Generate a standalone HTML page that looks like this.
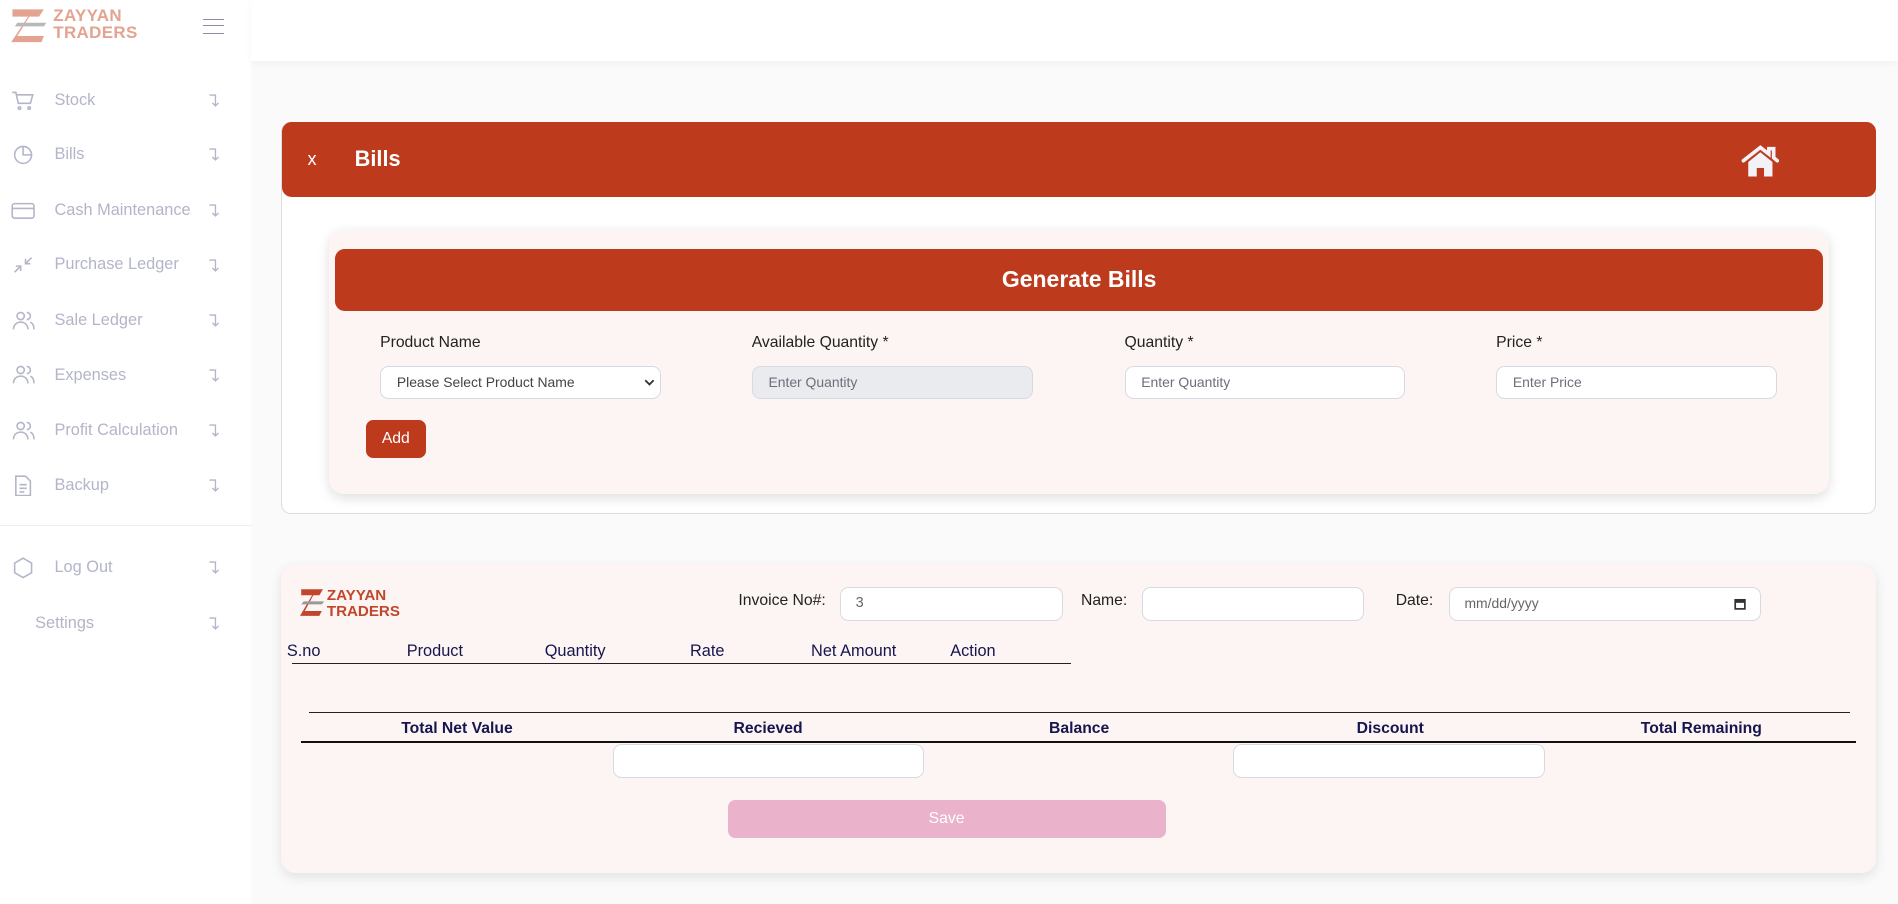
<!DOCTYPE html>
<html><head><meta charset="utf-8">
<style>
html{zoom:1.2105}
*{box-sizing:border-box;margin:0;padding:0}
body{width:1568px;height:747px;overflow:hidden;background:#fafafb;font-family:"Liberation Sans",sans-serif;position:relative}
.abs{position:absolute}
.side{left:0;top:0;width:207px;height:747px;background:#fff}
.mi{position:absolute;left:0;width:207px;height:20px;color:#b3b5c8;font-size:13.5px}
.mi .t{position:absolute;left:45px;top:2px}
.mi .ar{position:absolute;left:171px;top:3px}
.mi svg{position:absolute;left:9px;top:1px}
.topbar{left:207px;top:0;width:1361px;height:50px;background:#fff;box-shadow:0 2px 6px rgba(0,0,0,.04)}
.card1{left:232px;top:101px;width:1318px;height:324px;border:1px solid #dcdde3;border-radius:8px;background:#fff}
.hdr{left:233px;top:101px;width:1317px;height:62px;background:#bd3b1c;border-radius:8px;color:#fff}
.inner{left:272px;top:190px;width:1239px;height:218px;background:#fdf5f3;border-radius:12px;box-shadow:0 3px 10px rgba(0,0,0,.13)}
.gen{left:277px;top:206px;width:1229px;height:51px;background:#bd3b1c;border-radius:8px;color:#fff;font-weight:bold;font-size:19px;text-align:center;line-height:51px}
.lbl{font-size:13px;color:#222}
.inp{height:28px;width:232px;border:1px solid #d8dae3;border-radius:7px;background:#fff;font-size:11.5px;color:#6c6f7a;padding-left:13px;line-height:26px}
.card2{left:232px;top:467px;width:1318px;height:254px;background:#fdf5f3;border-radius:12px;box-shadow:0 3px 10px rgba(0,0,0,.1)}
.th{font-family:"Liberation Sans Narrow","Liberation Sans",sans-serif;font-size:13.5px;color:#15154f}
.tb{font-size:13px;font-weight:bold;color:#15154f;text-align:center;width:257px}
.i2{height:28px;border:1px solid #d8dae3;border-radius:7px;background:#fff;font-size:12px;color:#666;padding-left:12px;line-height:26px}
</style></head><body>
<svg width="0" height="0" style="position:absolute"><defs><symbol id="ar" viewBox="0 0 12 14"><path d="M2 2.5h5v9M4.5 9l2.5 2.5L9.5 9" fill="none" stroke="#b3b5c8" stroke-width="1.1"/></symbol></defs></svg>
<div class="abs side">
  <svg class="abs" style="left:8px;top:6px" width="32" height="30" viewBox="0 0 32 30"><path d="M2 2h26l-4 6H16L6 24h22l-2 5H1l14-21H2z" fill="#e3a390"/><path d="M6 13h24l-2 3H4z" fill="#b8b8b8"/></svg>
  <div class="abs" style="left:44px;top:7px;color:#e3a390;font-weight:bold;font-size:14px;line-height:14px;letter-spacing:.3px">ZAYYAN<br>TRADERS</div>
  <div class="abs" style="left:168px;top:16px;width:17px;height:12px;border-top:1.5px solid #8b8da8;border-bottom:1.5px solid #8b8da8"><div style="margin-top:4px;border-top:1.5px solid #8b8da8"></div></div>
  <div class="mi" style="top:73px"><svg width="20" height="18" viewBox="0 0 20 18" fill="none" stroke="#b3b5c8" stroke-width="1.3"><path d="M1 2h3l2 9h10l2-7H5"/><circle cx="7" cy="15" r="1"/><circle cx="15" cy="15" r="1"/></svg><span class="t">Stock</span><svg class="ar" style="left:171px" width="12" height="14"><use href="#ar"/></svg></div>
  <div class="mi" style="top:118px"><svg width="20" height="18" viewBox="0 0 20 18" fill="none" stroke="#b3b5c8" stroke-width="1.3"><circle cx="10" cy="9" r="7"/><path d="M10 2v7h7"/></svg><span class="t">Bills</span><svg class="ar" style="left:171px" width="12" height="14"><use href="#ar"/></svg></div>
  <div class="mi" style="top:164px"><svg width="20" height="18" viewBox="0 0 20 18" fill="none" stroke="#b3b5c8" stroke-width="1.3"><rect x="1" y="3" width="18" height="12" rx="2"/><path d="M1 7h18"/></svg><span class="t">Cash Maintenance</span><svg class="ar" style="left:171px" width="12" height="14"><use href="#ar"/></svg></div>
  <div class="mi" style="top:209px"><svg width="20" height="18" viewBox="0 0 20 18" fill="none" stroke="#b3b5c8" stroke-width="1.3"><path d="M3 15l5-5M4 10h4v4M17 3l-5 5M12 4v4h4"/></svg><span class="t">Purchase Ledger</span><svg class="ar" style="left:171px" width="12" height="14"><use href="#ar"/></svg></div>
  <div class="mi" style="top:255px"><svg width="20" height="18" viewBox="0 0 20 18" fill="none" stroke="#b3b5c8" stroke-width="1.3"><circle cx="8" cy="5" r="3"/><path d="M2 16c0-4 3-6 6-6s6 2 6 6M13 2a3 3 0 010 6M16 10c2 1 3 3 3 6"/></svg><span class="t">Sale Ledger</span><svg class="ar" style="left:171px" width="12" height="14"><use href="#ar"/></svg></div>
  <div class="mi" style="top:300px"><svg width="20" height="18" viewBox="0 0 20 18" fill="none" stroke="#b3b5c8" stroke-width="1.3"><circle cx="8" cy="5" r="3"/><path d="M2 16c0-4 3-6 6-6s6 2 6 6M13 2a3 3 0 010 6M16 10c2 1 3 3 3 6"/></svg><span class="t">Expenses</span><svg class="ar" style="left:171px" width="12" height="14"><use href="#ar"/></svg></div>
  <div class="mi" style="top:346px"><svg width="20" height="18" viewBox="0 0 20 18" fill="none" stroke="#b3b5c8" stroke-width="1.3"><circle cx="8" cy="5" r="3"/><path d="M2 16c0-4 3-6 6-6s6 2 6 6M13 2a3 3 0 010 6M16 10c2 1 3 3 3 6"/></svg><span class="t">Profit Calculation</span><svg class="ar" style="left:171px" width="12" height="14"><use href="#ar"/></svg></div>
  <div class="mi" style="top:391px"><svg width="20" height="18" viewBox="0 0 20 18" fill="none" stroke="#b3b5c8" stroke-width="1.3"><path d="M4 1h8l4 4v12H4z M7 8h6M7 11h6M7 14h4"/></svg><span class="t">Backup</span><svg class="ar" style="left:171px" width="12" height="14"><use href="#ar"/></svg></div>
  <div class="abs" style="left:0;top:434px;width:207px;border-top:1px solid #ececf0"></div>
  <div class="mi" style="top:459px"><svg width="20" height="18" viewBox="0 0 20 18" fill="none" stroke="#b3b5c8" stroke-width="1.3"><path d="M10 1l7 4v8l-7 4-7-4V5z"/></svg><span class="t">Log Out</span><svg class="ar" style="left:171px" width="12" height="14"><use href="#ar"/></svg></div>
  <div class="mi" style="top:505px"><span class="t" style="left:29px">Settings</span><svg class="ar" style="left:171px" width="12" height="14"><use href="#ar"/></svg></div>
</div>
<div class="abs topbar"></div>
<div class="abs card1"></div>
<div class="abs hdr">
  <span class="abs" style="left:21px;top:22px;font-size:15px">x</span>
  <span class="abs" style="left:60px;top:20px;font-size:18px;font-weight:bold">Bills</span>
  <svg class="abs" style="left:1205px;top:19px" width="32" height="27" viewBox="0 0 32 27"><path d="M2 13L16 2l7 5.5V3h4v7.5L30 13" fill="none" stroke="#f3f2f8" stroke-width="3" stroke-linecap="round"/><path d="M6 14L16 6l10 8v12h-7v-7h-6v7H6z" fill="#f3f2f8"/></svg>
</div>
<div class="abs inner"></div>
<div class="abs gen">Generate Bills</div>
<div class="abs lbl" style="left:314px;top:276px">Product Name</div>
<div class="abs lbl" style="left:621px;top:276px">Available Quantity *</div>
<div class="abs lbl" style="left:929px;top:276px">Quantity *</div>
<div class="abs lbl" style="left:1236px;top:276px">Price *</div>
<div class="abs inp" style="left:314px;top:302px;color:#444">Please Select Product Name<svg style="position:absolute;right:4px;top:10px" width="9" height="6" viewBox="0 0 9 6"><path d="M1 1l3.5 3.5L8 1" fill="none" stroke="#333" stroke-width="1.5"/></svg></div>
<div class="abs inp" style="left:621px;top:302px;background:#e9ebef">Enter Quantity</div>
<div class="abs inp" style="left:929px;top:302px">Enter Quantity</div>
<div class="abs inp" style="left:1236px;top:302px">Enter Price</div>
<div class="abs" style="left:302px;top:347px;width:50px;height:31px;background:#bd3b1c;border-radius:6px;color:#fff;font-size:13px;text-align:center;line-height:31px">Add</div>

<div class="abs card2"></div>
<svg class="abs" style="left:248px;top:486px" width="22" height="24" viewBox="0 0 22 24"><path d="M1 1h18l-3 5h-5L4 19h14l-2 4H0l10-17H1z" fill="#c0472c"/><path d="M3 11h17l-2 2.5H1z" fill="#999"/></svg>
<div class="abs" style="left:270px;top:486px;color:#c0472c;font-weight:bold;font-family:'Liberation Sans Narrow','Liberation Sans',sans-serif;font-size:12.5px;line-height:13px">ZAYYAN<br>TRADERS</div>
<div class="abs th" style="left:610px;top:489px;color:#222;font-size:13px">Invoice No#:</div>
<div class="abs i2" style="left:694px;top:485px;width:184px">3</div>
<div class="abs th" style="left:893px;top:489px;color:#222;font-size:13px">Name:</div>
<div class="abs i2" style="left:943px;top:485px;width:184px"></div>
<div class="abs th" style="left:1153px;top:489px;color:#222;font-size:13px">Date:</div>
<div class="abs i2" style="left:1197px;top:485px;width:258px;font-size:11.5px">mm/dd/yyyy<svg style="position:absolute;right:12px;top:8px" width="10" height="10" viewBox="0 0 10 10"><rect x="1" y="1.5" width="8" height="7.5" fill="none" stroke="#333" stroke-width="1.4"/><path d="M1 3h8" stroke="#333" stroke-width="2"/></svg></div>
<div class="abs th" style="left:237px;top:530px">S.no</div>
<div class="abs th" style="left:336px;top:530px">Product</div>
<div class="abs th" style="left:450px;top:530px">Quantity</div>
<div class="abs th" style="left:570px;top:530px">Rate</div>
<div class="abs th" style="left:670px;top:530px">Net Amount</div>
<div class="abs th" style="left:785px;top:530px">Action</div>
<div class="abs" style="left:241px;top:548px;width:644px;border-top:1px solid #222"></div>
<div class="abs" style="left:255px;top:588px;width:1273px;border-top:1px solid #222"></div>
<div class="abs tb" style="left:249px;top:595px">Total Net Value</div>
<div class="abs tb" style="left:506px;top:595px">Recieved</div>
<div class="abs tb" style="left:763px;top:595px">Balance</div>
<div class="abs tb" style="left:1020px;top:595px">Discount</div>
<div class="abs tb" style="left:1277px;top:595px">Total Remaining</div>
<div class="abs" style="left:249px;top:612px;width:1284px;border-top:2px solid #111"></div>
<div class="abs i2" style="left:506px;top:615px;width:257px"></div>
<div class="abs i2" style="left:1019px;top:615px;width:257px"></div>
<div class="abs" style="left:601px;top:661px;width:362px;height:31px;background:#eab3cb;border-radius:6px;color:#fff;font-size:13px;text-align:center;line-height:31px">Save</div>
</body></html>
